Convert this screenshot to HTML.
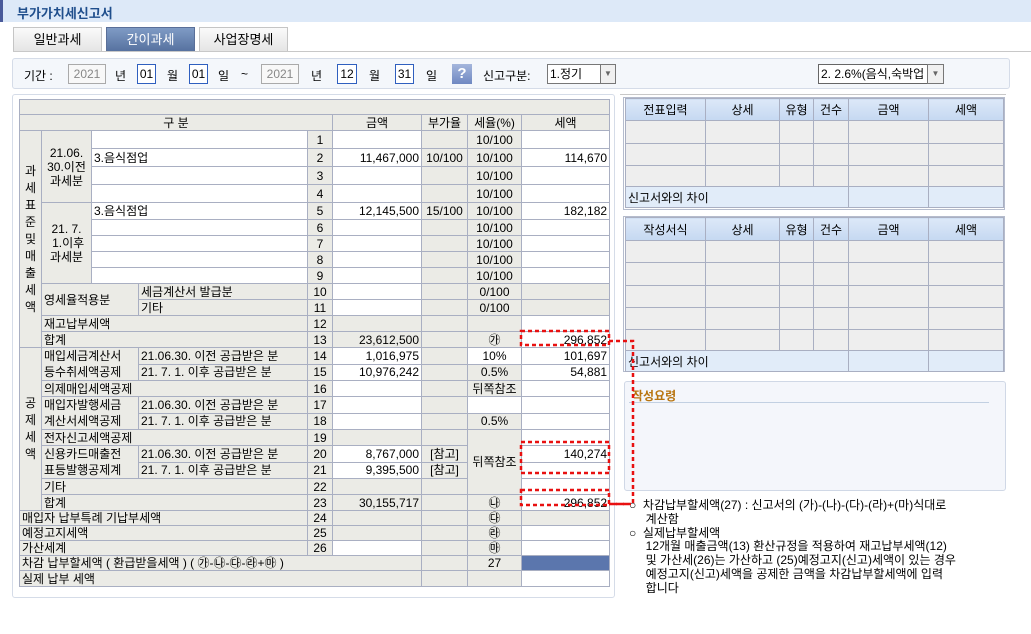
<!DOCTYPE html>
<html><head><meta charset="utf-8">
<style>
*{margin:0;padding:0;box-sizing:border-box}
body{width:1031px;height:634px;background:#fff;font-family:"Liberation Sans","Noto Sans CJK KR",sans-serif;font-size:12px;color:#000;position:relative;overflow:hidden}
.abs{position:absolute}
.title{left:0;top:0;width:1031px;height:22px;background:#dde9f8;border-left:3px solid #4a5a9a}
.title span{position:absolute;left:14px;top:3px;font-weight:bold;color:#1f4e8c;font-size:13px}
.tab{top:27px;height:25px;width:89px;border:1px solid #c5c5c5;border-bottom:none;background:linear-gradient(#fafafa,#e4e4e4);text-align:center;line-height:24px;font-size:13px}
.tab.sel{background:linear-gradient(#7f9bc5,#55709e);color:#fff;border-color:#5a6f98}
.bar{left:12px;top:58px;width:998px;height:31px;background:#f4f7fb;border:1px solid #d5dce8;border-radius:3px}
.in{position:absolute;top:5px;height:20px;border:1px solid #2f5fbf;background:#fff;text-align:center;line-height:18px}
.dis{border-color:#aaa;color:#888;background:#f8f8f8}
.lb{position:absolute;top:8px}
.panel{left:12px;top:94px;width:603px;height:504px;border:1px solid #d5dce8;border-radius:3px}
table.t{position:absolute;left:19px;top:99px;border-collapse:collapse;table-layout:fixed;width:590px}
.t td{border:1px solid #a9afc2;background:#ebebe6;padding:0 2px;line-height:14px;overflow:hidden;white-space:nowrap;font-size:12px}
.t td.w{background:#fff}
.t td.c{text-align:center}
.t td.r{text-align:right}
.t td.b{background:#5b76ad}
.rt{position:absolute;border-collapse:collapse;table-layout:fixed}
.rt td{border:1px solid #a9afc2;background:#eeeeee;text-align:center;font-size:12px;padding:0}
.rt tr.h td{background:linear-gradient(#dce8f8,#c5d8f1)}
.rt tr.d td{background:#e1ecf9}
.tx{left:629px;font-size:12px;line-height:13.8px}
</style></head><body>
<div class="abs title"><span>부가가치세신고서</span></div>
<div class="abs tab" style="left:13px">일반과세</div>
<div class="abs tab sel" style="left:106px">간이과세</div>
<div class="abs tab" style="left:199px">사업장명세</div>
<div class="abs" style="left:13px;top:51px;width:1018px;height:1px;background:#c8c8c8"></div>
<div class="abs bar">
<span class="lb" style="left:11px">기간 :</span>
<div class="in dis" style="left:55px;width:38px">2021</div>
<span class="lb" style="left:102px">년</span>
<div class="in" style="left:124px;width:19px">01</div>
<span class="lb" style="left:154px">월</span>
<div class="in" style="left:176px;width:19px">01</div>
<span class="lb" style="left:205px">일</span>
<span class="lb" style="left:228px">~</span>
<div class="in dis" style="left:248px;width:38px">2021</div>
<span class="lb" style="left:298px">년</span>
<div class="in" style="left:324px;width:20px">12</div>
<span class="lb" style="left:356px">월</span>
<div class="in" style="left:382px;width:19px">31</div>
<span class="lb" style="left:413px">일</span>
<div style="position:absolute;left:439px;top:5px;width:20px;height:20px;background:linear-gradient(#a4b6dc,#6f88c2);color:#fff;font-weight:bold;font-size:15px;text-align:center;line-height:20px">?</div>
<span class="lb" style="left:470px">신고구분:</span>
<div class="in" style="left:534px;width:54px;border-color:#777;text-align:left;padding-left:2px">1.정기</div>
<div class="in" style="left:587px;width:16px;border-color:#777;background:#f0f0f0;font-size:8px;color:#666">▼</div>
<div class="in" style="left:805px;width:110px;border-color:#666;text-align:left;padding-left:2px;overflow:hidden;white-space:nowrap">2. 2.6%(음식,숙박업</div>
<div class="in" style="left:914px;width:17px;border-color:#777;background:#f0f0f0;font-size:8px;color:#666">▼</div>
</div>
<div class="abs panel"></div>
<table class="t">
<colgroup><col style="width:22px"><col style="width:50px"><col style="width:47px"><col style="width:169px"><col style="width:25px"><col style="width:89px"><col style="width:46px"><col style="width:54px"><col style="width:88px"></colgroup>
<tr style="height:15px"><td colspan="9"></td></tr>
<tr style="height:16px"><td colspan="5" class="c">구 분</td><td class="c">금액</td><td class="c">부가율</td><td class="c">세율(%)</td><td class="c">세액</td></tr>
<tr style="height:18px"><td rowspan="13" class="c" style="line-height:17px;white-space:normal">과<br>세<br>표<br>준<br>및<br>매<br>출<br>세<br>액</td><td rowspan="4" class="c" style="white-space:normal;line-height:14px">21.06.<br>30.이전<br>과세분</td><td colspan="2" class="w"></td><td class="c">1</td><td class="w"></td><td></td><td class="c">10/100</td><td class="w"></td></tr>
<tr style="height:18px"><td colspan="2" class="w">3.음식점업</td><td class="c">2</td><td class="w r">11,467,000</td><td class="c">10/100</td><td class="c">10/100</td><td class="w r">114,670</td></tr>
<tr style="height:18px"><td colspan="2" class="w"></td><td class="c">3</td><td class="w"></td><td></td><td class="c">10/100</td><td class="w"></td></tr>
<tr style="height:18px"><td colspan="2" class="w"></td><td class="c">4</td><td class="w"></td><td></td><td class="c">10/100</td><td class="w"></td></tr>
<tr style="height:17px"><td rowspan="5" class="c" style="white-space:normal;line-height:14px">21. 7.<br>&nbsp;1.이후<br>과세분</td><td colspan="2" class="w">3.음식점업</td><td class="c">5</td><td class="w r">12,145,500</td><td class="c">15/100</td><td class="c">10/100</td><td class="w r">182,182</td></tr>
<tr style="height:16px"><td colspan="2" class="w"></td><td class="c">6</td><td class="w"></td><td></td><td class="c">10/100</td><td class="w"></td></tr>
<tr style="height:16px"><td colspan="2" class="w"></td><td class="c">7</td><td class="w"></td><td></td><td class="c">10/100</td><td class="w"></td></tr>
<tr style="height:16px"><td colspan="2" class="w"></td><td class="c">8</td><td class="w"></td><td></td><td class="c">10/100</td><td class="w"></td></tr>
<tr style="height:16px"><td colspan="2" class="w"></td><td class="c">9</td><td class="w"></td><td></td><td class="c">10/100</td><td class="w"></td></tr>
<tr style="height:16px"><td colspan="2" rowspan="2">영세율적용분</td><td>세금계산서 발급분</td><td class="c">10</td><td class="w"></td><td></td><td class="c">0/100</td><td></td></tr>
<tr style="height:16px"><td>기타</td><td class="c">11</td><td class="w"></td><td></td><td class="c">0/100</td><td></td></tr>
<tr style="height:16px"><td colspan="3">재고납부세액</td><td class="c">12</td><td></td><td></td><td></td><td class="w"></td></tr>
<tr style="height:16px"><td colspan="3">합계</td><td class="c">13</td><td class="r">23,612,500</td><td></td><td class="c">㉮</td><td class="w r">296,852</td></tr>
<tr style="height:16px"><td rowspan="10" class="c" style="line-height:17px;white-space:normal">공<br>제<br>세<br>액</td><td colspan="2" rowspan="2" style="line-height:16px;white-space:normal">매입세금계산서<br>등수취세액공제</td><td>21.06.30. 이전 공급받은 분</td><td class="c">14</td><td class="w r">1,016,975</td><td></td><td class="w c">10%</td><td class="w r">101,697</td></tr>
<tr style="height:16px"><td>21. 7. 1. 이후 공급받은 분</td><td class="c">15</td><td class="w r">10,976,242</td><td></td><td class="c">0.5%</td><td class="w r">54,881</td></tr>
<tr style="height:16px"><td colspan="3">의제매입세액공제</td><td class="c">16</td><td class="w"></td><td></td><td class="c">뒤쪽참조</td><td class="w"></td></tr>
<tr style="height:16px"><td colspan="2" rowspan="2" style="line-height:16px;white-space:normal">매입자발행세금<br>계산서세액공제</td><td>21.06.30. 이전 공급받은 분</td><td class="c">17</td><td class="w"></td><td></td><td class="w"></td><td class="w"></td></tr>
<tr style="height:16px"><td>21. 7. 1. 이후 공급받은 분</td><td class="c">18</td><td class="w"></td><td></td><td class="c">0.5%</td><td class="w"></td></tr>
<tr style="height:16px"><td colspan="3">전자신고세액공제</td><td class="c">19</td><td></td><td></td><td rowspan="4" class="c">뒤쪽참조</td><td class="w"></td></tr>
<tr style="height:16px"><td colspan="2" rowspan="2" style="line-height:16px;white-space:normal">신용카드매출전<br>표등발행공제계</td><td>21.06.30. 이전 공급받은 분</td><td class="c">20</td><td class="w r">8,767,000</td><td class="c">[참고]</td><td class="w r">140,274</td></tr>
<tr style="height:16px"><td>21. 7. 1. 이후 공급받은 분</td><td class="c">21</td><td class="w r">9,395,500</td><td class="c">[참고]</td><td class="w"></td></tr>
<tr style="height:16px"><td colspan="3">기타</td><td class="c">22</td><td></td><td></td><td class="w"></td></tr>
<tr style="height:16px"><td colspan="3">합계</td><td class="c">23</td><td class="r">30,155,717</td><td></td><td class="c">㉯</td><td class="w r">296,852</td></tr>
<tr style="height:15px"><td colspan="4">매입자 납부특례 기납부세액</td><td class="c">24</td><td></td><td></td><td class="c">㉰</td><td></td></tr>
<tr style="height:15px"><td colspan="4">예정고지세액</td><td class="c">25</td><td></td><td></td><td class="c">㉱</td><td class="w"></td></tr>
<tr style="height:15px"><td colspan="4">가산세계</td><td class="c">26</td><td class="w"></td><td></td><td class="c">㉲</td><td class="w"></td></tr>
<tr style="height:15px"><td colspan="6">차감 납부할세액 ( 환급받을세액 ) ( ㉮-㉯-㉰-㉱+㉲ )</td><td></td><td class="c">27</td><td class="b"></td></tr>
<tr style="height:16px"><td colspan="6">실제 납부 세액</td><td></td><td></td><td class="w"></td></tr>
</table>

<div class="abs" style="left:620px;top:94px;width:386px;height:1px;background:#c8c8c8"></div>
<div class="abs" style="left:623px;top:97px;width:382px;height:113px;border:1px solid #b5bccd"></div>
<table class="rt" style="left:625px;top:98px;width:378px">
<colgroup><col style="width:80px"><col style="width:74px"><col style="width:34px"><col style="width:35px"><col style="width:80px"><col style="width:75px"></colgroup>
<tr class="h" style="height:22px"><td>전표입력</td><td>상세</td><td>유형</td><td>건수</td><td>금액</td><td>세액</td></tr>
<tr style="height:23px"><td></td><td></td><td></td><td></td><td></td><td></td></tr>
<tr style="height:22px"><td></td><td></td><td></td><td></td><td></td><td></td></tr>
<tr style="height:21px"><td></td><td></td><td></td><td></td><td></td><td></td></tr>
<tr class="d" style="height:21px"><td colspan="4" style="text-align:left;padding-left:2px">신고서와의 차이</td><td></td><td></td></tr>
</table>
<div class="abs" style="left:623px;top:216px;width:382px;height:156px;border:1px solid #b5bccd"></div>
<table class="rt" style="left:625px;top:217px;width:378px">
<colgroup><col style="width:80px"><col style="width:74px"><col style="width:34px"><col style="width:35px"><col style="width:80px"><col style="width:75px"></colgroup>
<tr class="h" style="height:23px"><td>작성서식</td><td>상세</td><td>유형</td><td>건수</td><td>금액</td><td>세액</td></tr>
<tr style="height:22px"><td></td><td></td><td></td><td></td><td></td><td></td></tr>
<tr style="height:23px"><td></td><td></td><td></td><td></td><td></td><td></td></tr>
<tr style="height:22px"><td></td><td></td><td></td><td></td><td></td><td></td></tr>
<tr style="height:22px"><td></td><td></td><td></td><td></td><td></td><td></td></tr>
<tr style="height:21px"><td></td><td></td><td></td><td></td><td></td><td></td></tr>
<tr class="d" style="height:21px"><td colspan="4" style="text-align:left;padding-left:2px">신고서와의 차이</td><td></td><td></td></tr>
</table>
<div class="abs" style="left:624px;top:381px;width:382px;height:110px;border:1px solid #d0d8e6;border-radius:3px;background:#f4f6fb"></div>
<div class="abs" style="left:632px;top:387px;font-weight:bold;color:#b8740f;font-size:12px">작성요령</div>
<div class="abs" style="left:629px;top:402px;width:360px;height:1px;background:#c2d0e2"></div>

<div class="abs tx" style="top:499px">○&nbsp; 차감납부할세액(27) : 신고서의 (가)-(나)-(다)-(라)+(마)식대로<br>&nbsp;&nbsp;&nbsp;&nbsp; 계산함<br>○&nbsp; 실제납부할세액<br>&nbsp;&nbsp;&nbsp;&nbsp; 12개월 매출금액(13) 환산규정을 적용하여 재고납부세액(12)<br>&nbsp;&nbsp;&nbsp;&nbsp; 및 가산세(26)는 가산하고 (25)예정고지(신고)세액이 있는 경우<br>&nbsp;&nbsp;&nbsp;&nbsp; 예정고지(신고)세액을 공제한 금액을 차감납부할세액에 입력<br>&nbsp;&nbsp;&nbsp;&nbsp; 합니다</div>

<svg class="abs" style="left:0;top:0" width="1031" height="634">
<g fill="none" stroke="#e81010" stroke-width="2.5" stroke-dasharray="4,3">
<rect x="521" y="331" width="88" height="14"/>
<rect x="521" y="442" width="88" height="31"/>
<rect x="521" y="490" width="88" height="15"/>
<polyline points="609,341 633,341 633,504 609,504"/>
<line x1="609" y1="504" x2="630" y2="504"/>
</g>
</svg>
</body></html>
